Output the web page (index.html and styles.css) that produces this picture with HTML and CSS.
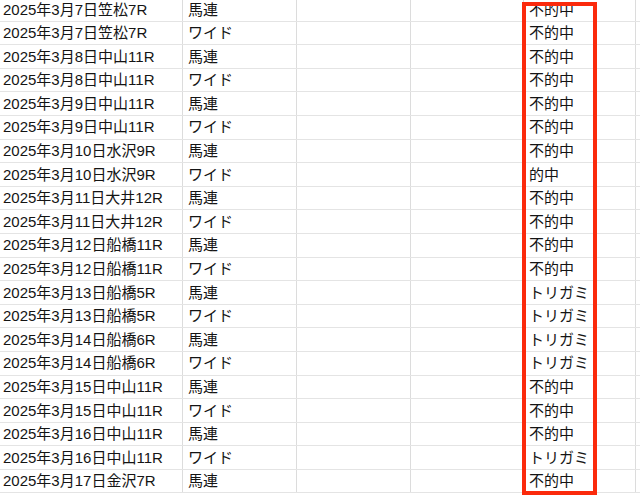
FILE: index.html
```html
<!DOCTYPE html>
<html lang="ja">
<head>
<meta charset="utf-8">
<link rel="stylesheet" href="styles.css">
</head>
<body>
<div class="sheet">
  <div class="grid">
    <div class="row"><div class="c a">2025年3月7日笠松7R</div><div class="c b">馬連</div><div class="c"></div><div class="c"></div><div class="c r">不的中</div><div class="c e"></div></div>
    <div class="row"><div class="c a">2025年3月7日笠松7R</div><div class="c b">ワイド</div><div class="c"></div><div class="c"></div><div class="c r">不的中</div><div class="c e"></div></div>
    <div class="row"><div class="c a">2025年3月8日中山11R</div><div class="c b">馬連</div><div class="c"></div><div class="c"></div><div class="c r">不的中</div><div class="c e"></div></div>
    <div class="row"><div class="c a">2025年3月8日中山11R</div><div class="c b">ワイド</div><div class="c"></div><div class="c"></div><div class="c r">不的中</div><div class="c e"></div></div>
    <div class="row"><div class="c a">2025年3月9日中山11R</div><div class="c b">馬連</div><div class="c"></div><div class="c"></div><div class="c r">不的中</div><div class="c e"></div></div>
    <div class="row"><div class="c a">2025年3月9日中山11R</div><div class="c b">ワイド</div><div class="c"></div><div class="c"></div><div class="c r">不的中</div><div class="c e"></div></div>
    <div class="row"><div class="c a">2025年3月10日水沢9R</div><div class="c b">馬連</div><div class="c"></div><div class="c"></div><div class="c r">不的中</div><div class="c e"></div></div>
    <div class="row"><div class="c a">2025年3月10日水沢9R</div><div class="c b">ワイド</div><div class="c"></div><div class="c"></div><div class="c r">的中</div><div class="c e"></div></div>
    <div class="row"><div class="c a">2025年3月11日大井12R</div><div class="c b">馬連</div><div class="c"></div><div class="c"></div><div class="c r">不的中</div><div class="c e"></div></div>
    <div class="row"><div class="c a">2025年3月11日大井12R</div><div class="c b">ワイド</div><div class="c"></div><div class="c"></div><div class="c r">不的中</div><div class="c e"></div></div>
    <div class="row"><div class="c a">2025年3月12日船橋11R</div><div class="c b">馬連</div><div class="c"></div><div class="c"></div><div class="c r">不的中</div><div class="c e"></div></div>
    <div class="row"><div class="c a">2025年3月12日船橋11R</div><div class="c b">ワイド</div><div class="c"></div><div class="c"></div><div class="c r">不的中</div><div class="c e"></div></div>
    <div class="row"><div class="c a">2025年3月13日船橋5R</div><div class="c b">馬連</div><div class="c"></div><div class="c"></div><div class="c r">トリガミ</div><div class="c e"></div></div>
    <div class="row"><div class="c a">2025年3月13日船橋5R</div><div class="c b">ワイド</div><div class="c"></div><div class="c"></div><div class="c r">トリガミ</div><div class="c e"></div></div>
    <div class="row"><div class="c a">2025年3月14日船橋6R</div><div class="c b">馬連</div><div class="c"></div><div class="c"></div><div class="c r">トリガミ</div><div class="c e"></div></div>
    <div class="row"><div class="c a">2025年3月14日船橋6R</div><div class="c b">ワイド</div><div class="c"></div><div class="c"></div><div class="c r">トリガミ</div><div class="c e"></div></div>
    <div class="row"><div class="c a">2025年3月15日中山11R</div><div class="c b">馬連</div><div class="c"></div><div class="c"></div><div class="c r">不的中</div><div class="c e"></div></div>
    <div class="row"><div class="c a">2025年3月15日中山11R</div><div class="c b">ワイド</div><div class="c"></div><div class="c"></div><div class="c r">不的中</div><div class="c e"></div></div>
    <div class="row"><div class="c a">2025年3月16日中山11R</div><div class="c b">馬連</div><div class="c"></div><div class="c"></div><div class="c r">不的中</div><div class="c e"></div></div>
    <div class="row"><div class="c a">2025年3月16日中山11R</div><div class="c b">ワイド</div><div class="c"></div><div class="c"></div><div class="c r">トリガミ</div><div class="c e"></div></div>
    <div class="row"><div class="c a">2025年3月17日金沢7R</div><div class="c b">馬連</div><div class="c"></div><div class="c"></div><div class="c r">不的中</div><div class="c e"></div></div>
  </div>
  <div class="highlight"></div>
</div>
</body>
</html>
```

FILE: styles.css
```css
html, body {
  margin: 0;
  padding: 0;
  background: #ffffff;
  overflow: hidden;
}

.sheet {
  position: relative;
  width: 640px;
  height: 496px;
  overflow: hidden;
}

.grid {
  display: flex;
  flex-direction: column;
  margin-top: -2px;
}

.row {
  display: grid;
  grid-template-columns: 183px 114px 114px 113px 112px 1fr;
  height: 23.6px;
  box-sizing: border-box;
  border-bottom: 1.5px solid #e4e4e4;
}

.c {
  box-sizing: border-box;
  border-right: 1px solid #dcdcdc;
  font-family: "Liberation Sans", "Noto Sans CJK JP", sans-serif;
  font-size: 15px;
  line-height: 18px;
  padding-top: 2.5px;
  padding-left: 5px;
  color: #141414;
  white-space: nowrap;
  overflow: hidden;
}

.c.a {
  padding-left: 3px;
}

.c.e {
  border-right: none;
}

.highlight {
  position: absolute;
  left: 522px;
  top: 2px;
  width: 75px;
  height: 493px;
  box-sizing: border-box;
  border: 4px solid #fb2a0c;
}
```
